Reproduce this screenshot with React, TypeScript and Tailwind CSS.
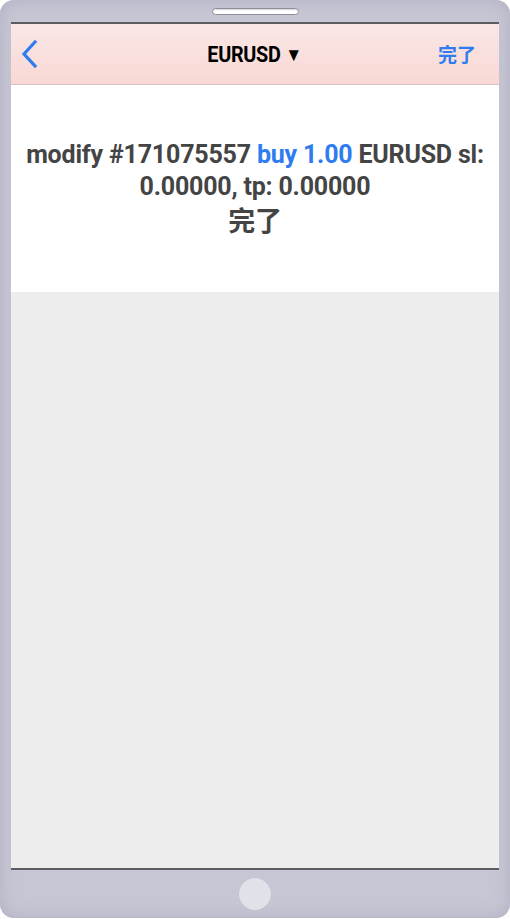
import React from "react";

export default function App() {
  return (
    <div className="w-[510px] h-[919px] bg-white">
      <div className="w-[510px] h-[918px] rounded-[14px] bg-[#c6c6d4] shadow-[inset_0_0_18px_#b0b0c4] flex flex-col items-center">
        <div className="h-[22px] w-full flex items-start justify-center pt-[8px]">
          <div className="w-[87px] h-[7px] rounded-full bg-white border border-[#8f8f99] shadow-[inset_0_1px_1px_#d8d8d8]" />
        </div>
        <div className="w-[488px] flex-1 flex flex-col border-t-2 border-b-2 border-[#5c5c60] bg-[#ededed]">
          <div className="h-[61px] bg-gradient-to-b from-[#f9e7e6] to-[#f9d8d4] border-b border-[#d5c4c4] flex items-center justify-between pl-[8px] pr-[11px] relative">
            <svg width="20" height="30" viewBox="0 0 20 30">
              <path d="M16 3 L5 15 L16 27" fill="none" stroke="#2f7bf0" strokeWidth="3.2" strokeLinecap="square" strokeLinejoin="miter" />
            </svg>
            <div className="absolute left-0 right-0 top-0 bottom-0 flex items-center justify-center pointer-events-none">
              <span className="inline-block text-[22px] font-bold text-black tracking-[-0.3px] scale-x-[0.9]" style={{ fontFamily: "Roboto, 'Liberation Sans', sans-serif" }}>
                EURUSD <span className="text-[19px] align-[1px]">▼</span>
              </span>
            </div>
            <span className="text-[19px] font-bold text-[#2f7bf0] mr-[12px]" style={{ fontFamily: "'Noto Sans CJK SC', sans-serif" }}>
              完了
            </span>
          </div>
          <div className="h-[207px] bg-white flex flex-col items-center pt-[54px]">
            <div className="text-center text-[25px] leading-[32px] font-bold text-[#444444] tracking-[-0.2px]" style={{ fontFamily: "Roboto, 'Noto Sans CJK SC', sans-serif" }}>
              <div>
                modify #171075557 <span className="text-[#2f7bf0]">buy 1.00</span> EURUSD sl:
              </div>
              <div>0.00000, tp: 0.00000</div>
              <div className="font-bold text-[27px] leading-[34px]" style={{ fontFamily: "'Noto Sans CJK SC', sans-serif" }}>完了</div>
            </div>
          </div>
          <div className="flex-1 bg-[#ededed]" />
        </div>
        <div className="h-[48px] w-full flex items-center justify-center">
          <div className="w-[32px] h-[32px] rounded-full bg-[#e1e1e9] shadow-[0_0_1px_#b8b8c8]" />
        </div>
      </div>
    </div>
  );
}
